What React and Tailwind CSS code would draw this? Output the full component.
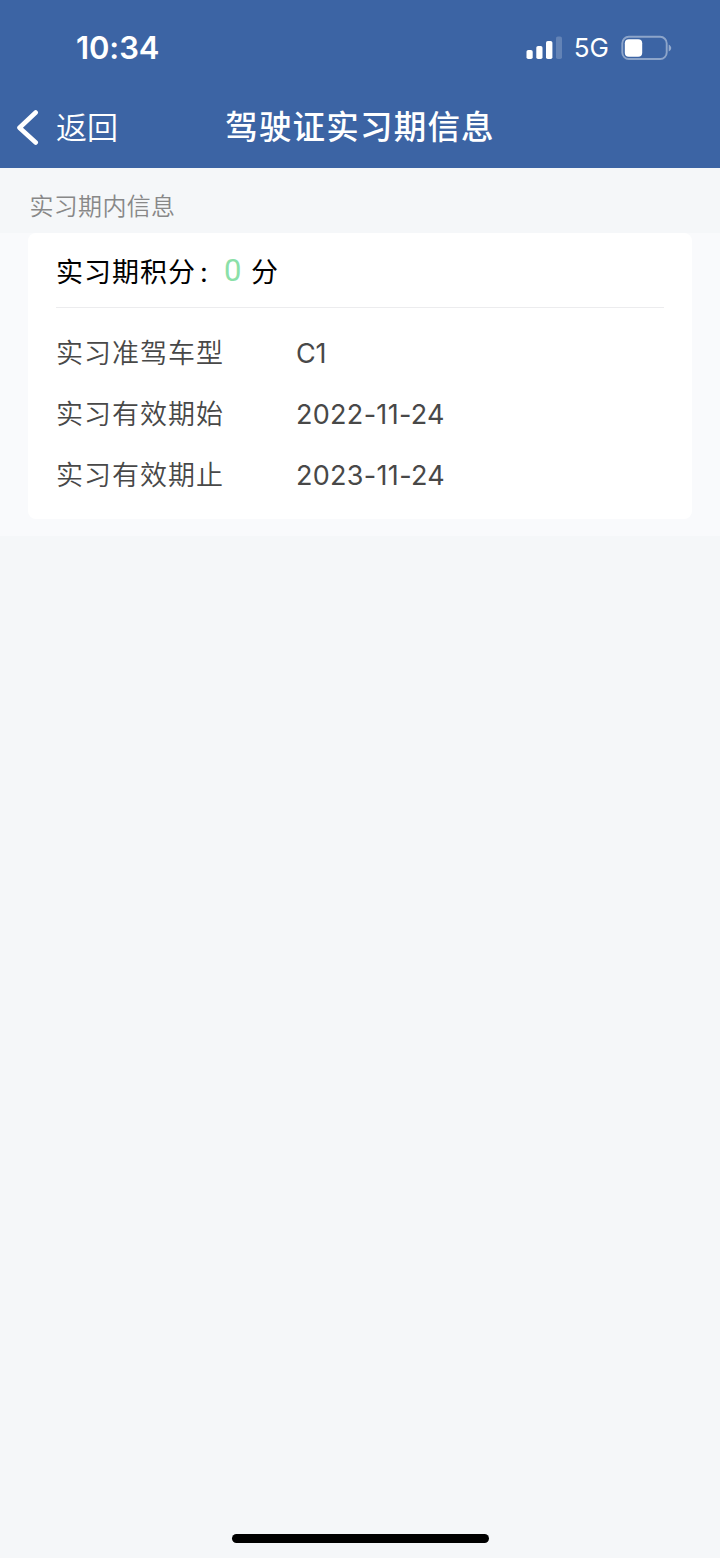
import React from 'react';

const details = [
  { label: '实习准驾车型', value: 'C1', tracking: 'tracking-[-0.1px]' },
  { label: '实习有效期始', value: '2022-11-24', tracking: 'tracking-[0.3px]' },
  { label: '实习有效期止', value: '2023-11-24', tracking: 'tracking-[0.3px]' },
];

const SignalIcon = () => (
  <svg width="36" height="24" viewBox="0 0 36 24" fill="#fff">
    <rect x="0.5" y="14" width="6.2" height="9" rx="1.8" />
    <rect x="10.3" y="10" width="6.2" height="13" rx="1.8" />
    <rect x="20" y="5" width="6.4" height="18" rx="1.8" />
    <rect x="30" y="0.5" width="6" height="22.5" rx="1.8" opacity="0.2" />
  </svg>
);

const BatteryIcon = () => (
  <svg width="51" height="26" viewBox="0 0 51 26" fill="none">
    <rect x="1.3" y="1.8" width="44.4" height="22.2" rx="6.5" stroke="#fff" strokeOpacity="0.42" strokeWidth="1.9" />
    <rect x="3.8" y="4.3" width="17.4" height="17.4" rx="4" fill="#fff" />
    <path d="M47.7 9.4c1.700 1 2.500 2.200 2.500 3.600s-.8 2.700-2.500 3.600z" fill="#fff" fillOpacity="0.45" />
  </svg>
);

const StatusBar = () => (
  <div className="flex h-[88px] items-start justify-between pt-[34px] pl-[76px] pr-12">
    <span className="text-[31px] leading-7 font-semibold tracking-[-0.1px]">10:34</span>
    <div className="flex items-center">
      <SignalIcon />
      <span className="ml-3 text-[26px] leading-7 font-normal">5G</span>
      <span className="ml-3"><BatteryIcon /></span>
    </div>
  </div>
);

const NavBar = () => (
  <div className="grid h-20 grid-cols-[1fr_auto_1fr] items-center">
    <button className="flex items-center pb-px pl-4 text-left">
      <svg width="23" height="36" viewBox="0 0 23 36" fill="none">
        <path d="M19.7 2.5L3.5 17.7L19.7 32.5" stroke="#fff" strokeWidth="4.6" strokeLinecap="round" strokeLinejoin="round" />
      </svg>
      <span className="ml-[17px] text-[31px] leading-10 font-[350]">返回</span>
    </button>
    <h1 className="text-[32.5px] leading-10 font-medium tracking-[1.2px]">驾驶证实习期信息</h1>
  </div>
);

const App = () => {
  return (
    <div className="flex h-[1558px] w-[720px] flex-col overflow-hidden bg-[#f5f7f9] font-[Inter,'Noto_Sans_CJK_SC',sans-serif]">
      <header className="h-[168px] bg-[#3c64a4] text-white">
        <StatusBar />
        <NavBar />
      </header>

      <main className="flex-1">
        <h2 className="flex h-[65px] items-center pt-3 pl-[29.5px] text-[24px] leading-8 font-[350] tracking-[0.3px] text-[#888]">
          实习期内信息
        </h2>

        <section className="h-[303px] bg-[#f9fafc] px-7">
          <div className="h-[286px] rounded-lg bg-white px-7">
            {/* Points earned in the probation period */}
            <div className="flex h-[75px] items-center border-b border-[#ececee] pt-1.5 text-[27px] leading-10 tracking-[1px] text-black">
              <span>实习期积分</span>
              <span className="w-7 pl-1">:</span>
              <span className="w-[19px] pb-1 font-[Roboto,sans-serif] text-[31px] tracking-normal text-[#8be0a8]">0</span>
              <span className="ml-2">分</span>
            </div>

            <dl className="pt-[15.5px] text-[27px] text-[#484848]">
              {details.map((item) => (
                <div key={item.label} className="flex h-[61px] items-center">
                  <dt className="w-60 font-[350] tracking-[1px]">{item.label}</dt>
                  <dd className={item.tracking}>{item.value}</dd>
                </div>
              ))}
            </dl>
          </div>
        </section>
      </main>

      {/* Home indicator */}
      <div className="mx-auto mb-[15px] h-[9px] w-[257px] rounded-full bg-black" />
    </div>
  );
};

export default App;
